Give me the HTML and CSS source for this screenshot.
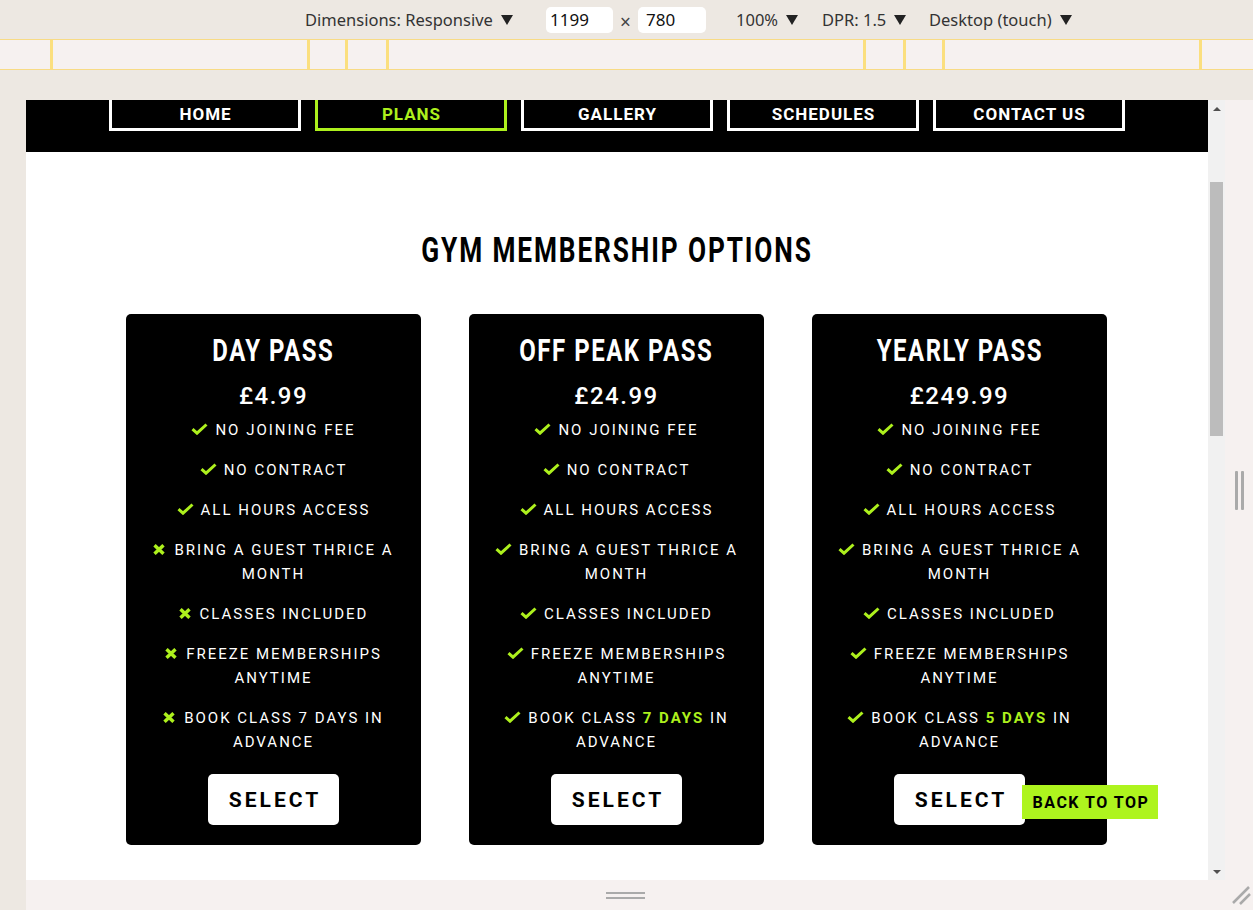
FILE: index.html
```html
<!DOCTYPE html>
<html lang="en">
<head>
<meta charset="utf-8">
<title>Plans</title>
<link rel="stylesheet" href="styles.css">
</head>
<body>
<div class="toolbar">
  <div class="tb-item tb-dim">Dimensions: Responsive<svg class="caret" viewBox="0 0 12 10" width="12" height="10"><path d="M0 0H12L6 10Z"/></svg></div>
  <div class="tb-input tb-w">1199</div>
  <div class="tb-times">×</div>
  <div class="tb-input tb-h">780</div>
  <div class="tb-item tb-zoom">100%<svg class="caret" viewBox="0 0 12 10" width="12" height="10"><path d="M0 0H12L6 10Z"/></svg></div>
  <div class="tb-item tb-dpr">DPR: 1.5<svg class="caret" viewBox="0 0 12 10" width="12" height="10"><path d="M0 0H12L6 10Z"/></svg></div>
  <div class="tb-item">Desktop (touch)<svg class="caret" viewBox="0 0 12 10" width="12" height="10"><path d="M0 0H12L6 10Z"/></svg></div>
</div>
<div class="ruler">
  <span class="tick" style="left:50px"></span>
  <span class="tick" style="left:307px"></span>
  <span class="tick" style="left:345px"></span>
  <span class="tick" style="left:386px"></span>
  <span class="tick" style="left:863px"></span>
  <span class="tick" style="left:903px"></span>
  <span class="tick" style="left:942px"></span>
  <span class="tick" style="left:1199px"></span>
</div>
<div class="stage">
  <div class="viewport">
    <div class="page">
      <nav class="nav">
        <a class="nav-btn">HOME</a>
        <a class="nav-btn active">PLANS</a>
        <a class="nav-btn">GALLERY</a>
        <a class="nav-btn">SCHEDULES</a>
        <a class="nav-btn">CONTACT US</a>
      </nav>
      <main class="plans">
        <h1 class="plans-title"><span class="narrow">GYM MEMBERSHIP OPTIONS</span></h1>
        <div class="cards">
          <section class="card">
            <h2 class="card-title"><span class="narrow">DAY PASS</span></h2>
            <div class="price">£4.99</div>
            <ul class="features">
              <li><svg class="ic-check" viewBox="0 0 17 12" width="17" height="12"><path d="M1.5 6.2L6 10.2L15.5 1.5"/></svg>NO JOINING FEE</li>
              <li><svg class="ic-check" viewBox="0 0 17 12" width="17" height="12"><path d="M1.5 6.2L6 10.2L15.5 1.5"/></svg>NO CONTRACT</li>
              <li><svg class="ic-check" viewBox="0 0 17 12" width="17" height="12"><path d="M1.5 6.2L6 10.2L15.5 1.5"/></svg>ALL HOURS ACCESS</li>
              <li><svg class="ic-x" viewBox="0 0 12 11" width="12" height="11"><path d="M1.5 1.2L10.5 9.8M10.5 1.2L1.5 9.8"/></svg>BRING A GUEST THRICE A MONTH</li>
              <li><svg class="ic-x" viewBox="0 0 12 11" width="12" height="11"><path d="M1.5 1.2L10.5 9.8M10.5 1.2L1.5 9.8"/></svg>CLASSES INCLUDED</li>
              <li><svg class="ic-x" viewBox="0 0 12 11" width="12" height="11"><path d="M1.5 1.2L10.5 9.8M10.5 1.2L1.5 9.8"/></svg>FREEZE MEMBERSHIPS ANYTIME</li>
              <li><svg class="ic-x" viewBox="0 0 12 11" width="12" height="11"><path d="M1.5 1.2L10.5 9.8M10.5 1.2L1.5 9.8"/></svg>BOOK CLASS 7 DAYS IN ADVANCE</li>
            </ul>
            <a class="select">SELECT</a>
          </section>
          <section class="card">
            <h2 class="card-title"><span class="narrow">OFF PEAK PASS</span></h2>
            <div class="price">£24.99</div>
            <ul class="features">
              <li><svg class="ic-check" viewBox="0 0 17 12" width="17" height="12"><path d="M1.5 6.2L6 10.2L15.5 1.5"/></svg>NO JOINING FEE</li>
              <li><svg class="ic-check" viewBox="0 0 17 12" width="17" height="12"><path d="M1.5 6.2L6 10.2L15.5 1.5"/></svg>NO CONTRACT</li>
              <li><svg class="ic-check" viewBox="0 0 17 12" width="17" height="12"><path d="M1.5 6.2L6 10.2L15.5 1.5"/></svg>ALL HOURS ACCESS</li>
              <li><svg class="ic-check" viewBox="0 0 17 12" width="17" height="12"><path d="M1.5 6.2L6 10.2L15.5 1.5"/></svg>BRING A GUEST THRICE A MONTH</li>
              <li><svg class="ic-check" viewBox="0 0 17 12" width="17" height="12"><path d="M1.5 6.2L6 10.2L15.5 1.5"/></svg>CLASSES INCLUDED</li>
              <li><svg class="ic-check" viewBox="0 0 17 12" width="17" height="12"><path d="M1.5 6.2L6 10.2L15.5 1.5"/></svg>FREEZE MEMBERSHIPS ANYTIME</li>
              <li><svg class="ic-check" viewBox="0 0 17 12" width="17" height="12"><path d="M1.5 6.2L6 10.2L15.5 1.5"/></svg>BOOK CLASS <strong class="hl">7 DAYS</strong> IN ADVANCE</li>
            </ul>
            <a class="select">SELECT</a>
          </section>
          <section class="card">
            <h2 class="card-title"><span class="narrow">YEARLY PASS</span></h2>
            <div class="price">£249.99</div>
            <ul class="features">
              <li><svg class="ic-check" viewBox="0 0 17 12" width="17" height="12"><path d="M1.5 6.2L6 10.2L15.5 1.5"/></svg>NO JOINING FEE</li>
              <li><svg class="ic-check" viewBox="0 0 17 12" width="17" height="12"><path d="M1.5 6.2L6 10.2L15.5 1.5"/></svg>NO CONTRACT</li>
              <li><svg class="ic-check" viewBox="0 0 17 12" width="17" height="12"><path d="M1.5 6.2L6 10.2L15.5 1.5"/></svg>ALL HOURS ACCESS</li>
              <li><svg class="ic-check" viewBox="0 0 17 12" width="17" height="12"><path d="M1.5 6.2L6 10.2L15.5 1.5"/></svg>BRING A GUEST THRICE A MONTH</li>
              <li><svg class="ic-check" viewBox="0 0 17 12" width="17" height="12"><path d="M1.5 6.2L6 10.2L15.5 1.5"/></svg>CLASSES INCLUDED</li>
              <li><svg class="ic-check" viewBox="0 0 17 12" width="17" height="12"><path d="M1.5 6.2L6 10.2L15.5 1.5"/></svg>FREEZE MEMBERSHIPS ANYTIME</li>
              <li><svg class="ic-check" viewBox="0 0 17 12" width="17" height="12"><path d="M1.5 6.2L6 10.2L15.5 1.5"/></svg>BOOK CLASS <strong class="hl">5 DAYS</strong> IN ADVANCE</li>
            </ul>
            <a class="select">SELECT</a>
          </section>
        </div>
      </main>
    </div>
    <div class="scrollbar">
      <div class="sb-btn"><span class="arrow-up"></span></div>
      <div class="sb-track"><div class="sb-thumb"></div></div>
      <div class="sb-btn"><span class="arrow-down"></span></div>
    </div>
    <a class="back-top">BACK TO TOP</a>
  </div>
  <div class="side-right"><span class="grip-v"></span><span class="grip-v"></span></div>
  <div class="side-bottom"><span class="grip-h"></span><span class="grip-h"></span></div>
  <div class="corner"><svg viewBox="0 0 20 20" width="20" height="20"><path d="M2 18L18 2M9 19L19 9"/></svg></div>
</div>
</body>
</html>
```
FILE: styles.css
```css
* { box-sizing: border-box; }

body {
  margin: 0;
  width: 1253px;
  height: 910px;
  overflow: hidden;
  background: #ede8e2;
  font-family: "Noto Sans", "Liberation Sans", sans-serif;
}

/* devtools toolbar */
.toolbar {
  height: 39px;
  display: flex;
  align-items: center;
  padding-left: 305px;
  color: #333;
  font-size: 16.5px;
}
.tb-item { display: flex; align-items: center; white-space: nowrap; }
.caret { margin-left: 8px; fill: #222; }
.tb-dim { width: 241px; }
.tb-zoom { width: 86px; }
.tb-dpr { width: 107px; }
.tb-input {
  height: 26px;
  background: #fff;
  border-radius: 5px;
  padding-left: 4px;
  display: flex;
  align-items: center;
  font-size: 17px;
  color: #111;
}
.tb-w { width: 67px; }
.tb-h { width: 68px; padding-left: 8px; margin-right: 30px; }
.tb-times { width: 25px; text-align: center; font-size: 19px; color: #444; padding-top: 4px; }

/* ruler */
.ruler {
  position: relative;
  height: 31px;
  background: #f6f1f0;
  border-top: 1px solid #f8db85;
  border-bottom: 1px solid #f8db85;
}
.tick {
  position: absolute;
  top: 0;
  bottom: 0;
  width: 3px;
  background: #fbdf7e;
}

/* stage */
.stage {
  display: grid;
  grid-template-columns: 26px 1199px 28px;
  grid-template-rows: 30px 780px 30px;
}
.viewport {
  grid-column: 2;
  grid-row: 2;
  position: relative;
  display: flex;
  overflow: hidden;
  background: #fff;
}
.side-right {
  grid-column: 3;
  grid-row: 2;
  background: #f6f1f0;
  display: flex;
  align-items: center;
  justify-content: center;
  gap: 3px;
}
.grip-v { width: 3px; height: 39px; background: #aaa; border-radius: 1px; }
.side-bottom {
  grid-column: 2;
  grid-row: 3;
  background: #f6f1f0;
  display: flex;
  flex-direction: column;
  align-items: center;
  justify-content: center;
  gap: 3px;
}
.grip-h { width: 39px; height: 2px; background: #aaa; }
.corner {
  grid-column: 3;
  grid-row: 3;
  background: #f6f1f0;
  display: flex;
  align-items: center;
  justify-content: center;
  padding-left: 4px;
}
.corner path { stroke: #aaa; stroke-width: 2.5; fill: none; }

/* page */
.page {
  width: 1182px;
  height: 780px;
  overflow: hidden;
  background: #fff;
}
.nav {
  height: 52px;
  background: #000;
  display: flex;
  justify-content: center;
  gap: 14px;
  padding-bottom: 21px;
}
.nav-btn {
  width: 192px;
  height: 31px;
  border: 3px solid #fff;
  border-top: 0;
  display: flex;
  align-items: center;
  justify-content: center;
  color: #fff;
  font: 700 17px/1 Roboto, sans-serif;
  letter-spacing: 1px;
  padding-left: 1px;
  padding-top: 1px;
}
.nav-btn.active { border-color: #adf01d; color: #adf01d; }

/* condensed display type (Fjalla-like) */
.narrow {
  display: inline-block;
  transform: scaleX(0.75);
  transform-origin: center;
  white-space: nowrap;
}

.plans { padding-top: 79px; }
.plans-title {
  margin: 0 0 43px;
  text-align: center;
  font: 700 35px/40px Roboto, sans-serif;
  letter-spacing: 2.5px;
  color: #000;
}
.cards {
  display: flex;
  justify-content: center;
  gap: 48px;
  padding-right: 1px;
}
.card {
  width: 295px;
  background: #000;
  border-radius: 5px;
  padding: 18px 20px 20px;
  color: #fff;
  text-align: center;
  display: flex;
  flex-direction: column;
  align-items: center;
}
.card-title {
  margin: 0;
  font: 700 32px/36px Roboto, sans-serif;
  letter-spacing: 2px;
}
.price {
  margin-top: 13px;
  font: 500 24px/30px Roboto, sans-serif;
  letter-spacing: 1.5px;
}
.features {
  list-style: none;
  margin: 7px 0 0;
  padding: 0;
  width: 100%;
  display: flex;
  flex-direction: column;
  gap: 16px;
  font: 400 15px/24px Roboto, sans-serif;
  letter-spacing: 2px;
}
.ic-check, .ic-x { vertical-align: baseline; }
.ic-check { margin-right: 7px; }
.ic-x { margin-right: 9px; }
.ic-check path, .ic-x path {
  fill: none;
  stroke: #adf01d;
  stroke-width: 3;
}
.ic-x path { stroke-width: 3.4; }
.hl { color: #adf01d; font-weight: 700; }
.select {
  margin-top: 20px;
  width: 131px;
  height: 51px;
  background: #fff;
  color: #000;
  border-radius: 5px;
  display: flex;
  align-items: center;
  justify-content: center;
  padding-left: 3px;
  padding-top: 2px;
  font: 700 21px/1 Roboto, sans-serif;
  letter-spacing: 3px;
}

/* scrollbar */
.scrollbar {
  width: 17px;
  background: #f1f1f1;
  display: flex;
  flex-direction: column;
}
.sb-btn {
  height: 17px;
  display: flex;
  align-items: center;
  justify-content: center;
}
.arrow-up, .arrow-down {
  width: 0;
  height: 0;
  border-left: 4px solid transparent;
  border-right: 4px solid transparent;
}
.arrow-up { border-bottom: 4px solid #505050; }
.arrow-down { border-top: 4px solid #505050; }
.sb-track { flex: 1; padding: 65px 2px 0; }
.sb-thumb { height: 254px; background: #bcbcbc; }

/* back to top */
.back-top {
  position: absolute;
  right: 67px;
  bottom: 61px;
  width: 136px;
  height: 34px;
  background: #aef41e;
  color: #000;
  display: flex;
  align-items: center;
  justify-content: center;
  padding-left: 2px;
  padding-top: 1px;
  font: 700 16px/1 Roboto, sans-serif;
  letter-spacing: 1.5px;
}
```
